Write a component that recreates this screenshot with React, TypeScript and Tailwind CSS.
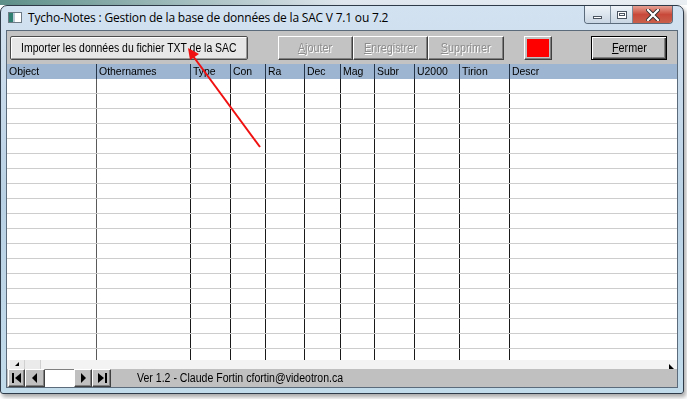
import React from "react";

// colonnes de la grille (largeurs dans la classe grid-cols plus bas)
const colonnes = ["Object", "Othernames", "Type", "Con", "Ra", "Dec", "Mag", "Subr", "U2000", "Tirion", "Descr"];
const lignes = Array.from({ length: 19 }, (_, i) => i);

const bevel =
  "border border-t-white border-l-white border-b-[#404040] border-r-[#404040] shadow-[inset_-1px_-1px_0_#808080]";

function NavButton({ kind, w }: { kind: "first" | "prev" | "next" | "last"; w: string }) {
  return (
    <div className={`${w} h-[18px] bg-[#c0c0c0] ${bevel} flex items-center justify-center`}>
      <svg width="12" height="12" viewBox="0 0 12 12">
        {kind === "first" && (
          <>
            <rect x="1" y="1" width="2" height="10" fill="#000" />
            <polygon points="10,1 10,11 4,6" fill="#000" />
          </>
        )}
        {kind === "prev" && <polygon points="8,1 8,11 3,6" fill="#000" />}
        {kind === "next" && <polygon points="4,1 4,11 9,6" fill="#000" />}
        {kind === "last" && (
          <>
            <polygon points="2,1 2,11 8,6" fill="#000" />
            <rect x="9" y="1" width="2" height="10" fill="#000" />
          </>
        )}
      </svg>
    </div>
  );
}

export default function App() {
  return (
    <div className="relative w-[687px] h-[399px] bg-white overflow-hidden" style={{ fontFamily: "'Liberation Sans', Arial, sans-serif" }}>
      {/* fenêtre derrière */}
      <div className="h-[5px] w-[687px] bg-gradient-to-r from-[#5d8f88] via-[#dfe6ee] to-[#e9eef3]" />

      {/* fenêtre principale */}
      <div className="w-[684px] h-[389px] border border-[#2f3b48] rounded-t-[7px] rounded-b-[3px] px-[5px] pb-[5px] bg-gradient-to-b from-[#d3e2f1] via-[#b9d1e4] to-[#c3dcec] shadow-[2px_3px_4px_rgba(0,0,0,0.35)]">
        {/* barre de titre */}
        <div className="h-[24px] flex items-start relative">
          <div className="mt-[6px] ml-[2px] w-[14px] h-[11px] border border-[#6c7a86] bg-white flex">
            <div className="w-[4px] h-full bg-[#2f7f73]" />
            <div className="w-[2px] h-full bg-[#b8c8d4]" />
          </div>
          <div
            className="ml-[6px] mt-[4px] text-[12px] leading-[16px] tracking-[-0.2px] text-black"
            style={{ fontFamily: "'Open Sans', 'Noto Sans', sans-serif" }}
          >
            Tycho-Notes : Gestion de la base de données de la SAC V 7.1 ou 7.2
          </div>
          <div className="ml-auto mr-[5px] flex h-[18px] border border-t-0 border-[#5b6b7c] rounded-b-[4px] overflow-hidden">
            <div className="w-[26px] bg-gradient-to-b from-[#eef3f8] to-[#c9d6e3] border-r border-[#7d8c9b] flex items-center justify-center">
              <div className="w-[9px] h-[3px] mt-[6px] bg-white border border-[#4a5561]" />
            </div>
            <div className="w-[22px] bg-gradient-to-b from-[#eef3f8] to-[#c9d6e3] border-r border-[#7d8c9b] flex items-center justify-center">
              <div className="w-[10px] h-[8px] border border-[#4a5561] bg-white flex items-center justify-center">
                <div className="w-[6px] h-[3px] border border-[#4a5561]" />
              </div>
            </div>
            <div className="w-[39px] bg-gradient-to-b from-[#e6a093] via-[#c8483a] to-[#c9604c] flex items-center justify-center">
              <svg width="14" height="12" viewBox="0 0 14 12">
                <path d="M2 1 L12 11 M12 1 L2 11" stroke="#2c2c2c" strokeWidth="4" strokeLinecap="square" />
                <path d="M2 1 L12 11 M12 1 L2 11" stroke="#fff" strokeWidth="2.2" strokeLinecap="square" />
              </svg>
            </div>
          </div>
        </div>

        {/* zone client */}
        <div className="h-[358px] border border-[#5b6b7c] bg-[#c3c3c3] flex flex-col text-[11px] text-black">
          {/* barre d'outils */}
          <div className="h-[33px] flex items-start pt-[5px] shrink-0">
            <div className="ml-[3px] w-[238px] h-[24px] border border-[#4b4b4b] rounded-[2px] bg-[#e7e7e7] shadow-[inset_1px_1px_0_#fff,inset_-1px_-1px_0_#9a9a9a] flex items-center justify-center text-[12px] whitespace-nowrap">
              <span className="inline-block scale-x-[0.87]">Importer les données du fichier TXT de la SAC</span>
            </div>
            <div className={`ml-[30px] w-[75px] h-[24px] ${bevel} flex items-center justify-center text-[12px] text-[#8d8d8d] [text-shadow:1px_1px_0_#fff]`}>
              <span className="inline-block scale-x-[0.9]"><u>A</u>jouter</span>
            </div>
            <div className={`w-[75px] h-[24px] ${bevel} flex items-center justify-center text-[12px] text-[#8d8d8d] [text-shadow:1px_1px_0_#fff]`}>
              <span className="inline-block scale-x-[0.9]"><u>E</u>nregistrer</span>
            </div>
            <div className={`w-[76px] h-[24px] ${bevel} flex items-center justify-center text-[12px] text-[#8d8d8d] [text-shadow:1px_1px_0_#fff]`}>
              <span className="inline-block scale-x-[0.9]"><u>S</u>upprimer</span>
            </div>
            <div className={`ml-[20px] w-[28px] h-[24px] ${bevel} p-[2px]`}>
              <div className="w-full h-full bg-[#ff0000]" />
            </div>
            <div className="ml-[39px] w-[76px] h-[24px] border border-black shadow-[inset_1px_1px_0_#fff,inset_-1px_-1px_0_#404040,inset_-2px_-2px_0_#808080] flex items-center justify-center text-[12px]">
              <span className="inline-block scale-x-[0.9]"><u>F</u>ermer</span>
            </div>
          </div>

          {/* en-tête de la grille */}
          <div className="h-[15px] shrink-0 grid grid-cols-[89px_94px_40px_35px_39px_36px_34px_40px_45px_50px_1fr] bg-[#9db5d0]">
            {colonnes.map((c, i) => (
              <div key={c} className={`pl-[2px] leading-[15px] overflow-hidden whitespace-nowrap ${i > 0 ? "border-l border-[#26364a]" : ""}`}>
                <span className="inline-block origin-left scale-x-[0.95]">{c}</span>
              </div>
            ))}
          </div>

          {/* lignes */}
          <div className="h-[281px] shrink-0 overflow-hidden bg-white">
            {lignes.map((r) => (
              <div key={r} className="h-[15px] grid grid-cols-[89px_94px_40px_35px_39px_36px_34px_40px_45px_50px_1fr] border-b border-[#cdcdcd]">
                {colonnes.map((c, i) => (
                  <div key={c} className={i > 0 ? (i === 1 ? "border-l border-[#5a5a5a]" : "border-l border-[#1a1a1a]") : ""} />
                ))}
              </div>
            ))}
          </div>

          {/* barre de défilement horizontale */}
          <div className="h-[9px] shrink-0 bg-[#f3f3f3] flex items-stretch relative">
            <div className="ml-[3px] w-[15px] bg-[#ebebeb] border-r border-[#d0d0d0] relative">
              <svg className="absolute left-[5px] top-[2px]" width="5" height="4" viewBox="0 0 5 4">
                <polygon points="4,0 4,4 0,4" fill="#000" />
              </svg>
            </div>
            <div className="w-[16px] bg-[#ebebeb] border-r border-[#d0d0d0]" />
            <svg className="ml-auto mr-[3px] mt-[4px]" width="5" height="5" viewBox="0 0 5 5">
              <polygon points="0,0 5,5 0,5" fill="#000" />
            </svg>
          </div>

          {/* barre de navigation */}
          <div className="h-[18px] shrink-0 flex items-stretch bg-[#c0c0c0]">
            <div className="ml-[1px] flex">
              <NavButton kind="first" w="w-[17px]" />
              <NavButton kind="prev" w="w-[20px]" />
              <div className="w-[29px] h-[18px] bg-white border-t border-[#808080]" />
              <NavButton kind="next" w="w-[18px]" />
              <NavButton kind="last" w="w-[19px]" />
            </div>
            <div className="ml-[26px] text-[12px] leading-[18px] whitespace-nowrap">
              <span className="inline-block origin-left scale-x-[0.88]">Ver 1.2 - Claude Fortin cfortin@videotron.ca</span>
            </div>
          </div>
        </div>
      </div>

      {/* flèche rouge d'annotation */}
      <svg className="absolute left-0 top-0 pointer-events-none" width="687" height="399" viewBox="0 0 687 399">
        <line x1="260" y1="147" x2="193" y2="56" stroke="#f01010" strokeWidth="2" />
        <polygon points="188,48 199,54 190,60" fill="#f01010" />
      </svg>
    </div>
  );
}
